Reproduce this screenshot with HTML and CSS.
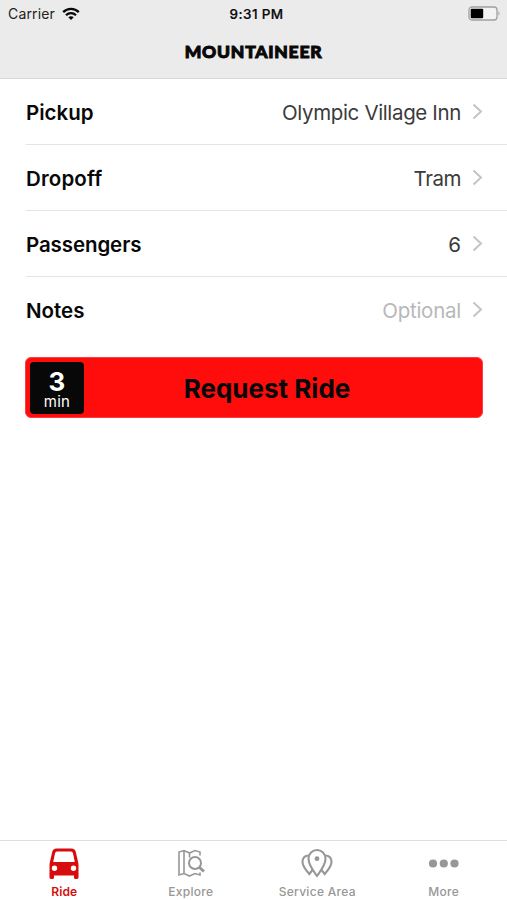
FILE: index.html
```html
<!DOCTYPE html>
<html lang="en">
<head>
<meta charset="utf-8">
<title>Mountaineer</title>
<link rel="stylesheet" href="styles.css">
</head>
<body>
<div class="app">
  <header class="header">
    <div class="status">
      <div class="carrier"><span>Carrier</span>
        <svg width="18" height="14" viewBox="0 0 18 14" fill="none" stroke="#080808" stroke-width="2.3"><path d="M1.2 5.1C5.5.8 12.5.8 16.800 5.1M4 8.200c2.800-2.800 7.200-2.800 10 0"/><path d="M6.300 10.300c1.500-1.500 3.900-1.500 5.400 0L9 13z" fill="#080808" stroke="none"/></svg>
      </div>
      <span class="time">9:31 PM</span>
      <svg class="battery" width="33" height="15" viewBox="0 0 33 15"><rect x="1" y="1" width="28" height="13" rx="3" fill="#f3f3f3" stroke="#a0a0a0" stroke-width="1.300"/><rect x="2.700" y="2.700" width="12.500" height="9.600" rx="1" fill="#000"/><path d="M30.500 5.300q2 2.200 0 4.400z" fill="#999"/></svg>
    </div>
    <h1 class="title">MOUNTAINEER</h1>
  </header>
  <main class="main">
    <div class="row"><span class="label">Pickup</span><span class="value village">Olympic Village Inn</span><svg class="chevron" viewBox="0 0 11 17"><path d="M1.500 1.500l7.500 7-7.500 7"/></svg></div>
    <div class="row"><span class="label dropoff">Dropoff</span><span class="value tram">Tram</span><svg class="chevron" viewBox="0 0 11 17"><path d="M1.500 1.500l7.500 7-7.500 7"/></svg></div>
    <div class="row"><span class="label passengers">Passengers</span><span class="value">6</span><svg class="chevron" viewBox="0 0 11 17"><path d="M1.500 1.500l7.500 7-7.500 7"/></svg></div>
    <div class="row"><span class="label">Notes</span><span class="value optional">Optional</span><svg class="chevron" viewBox="0 0 11 17"><path d="M1.500 1.500l7.500 7-7.500 7"/></svg></div>
    <button class="request">
      <span class="eta"><b>3</b><span>min</span></span>
      <span class="request-label">Request Ride</span>
    </button>
  </main>
  <nav class="tabs">
    <a class="tab active">
      <svg width="32" height="34" viewBox="0 0 32 34"><path fill="#d80c0c" fill-rule="evenodd" d="M8.500 1.500h15q3.500 0 4.300 3.500l2.200 9.500q.5 1.500.5 4v12q0 1.500-2 1.500h-1q-1.500 0-1.500-1.500V28.500H6v2Q6 32 4.500 32h-1q-2 0-2-1.500v-12q0-2.500.5-4L4.200 5q.8-3.500 4.300-3.500zM9 4.500Q7.500 4.500 7.100 6L5.200 15h21.600l-1.900-9Q24.500 4.500 23 4.500zM6.500 18.500a2.700 2.700 0 1 0 0 5.400 2.700 2.700 0 0 0 0-5.400zm19 0a2.700 2.700 0 1 0 0 5.400 2.700 2.700 0 0 0 0-5.400z"/></svg>
      <span>Ride</span>
    </a>
    <a class="tab">
      <svg width="32" height="34" viewBox="0 0 32 34" fill="none" stroke="#979797" stroke-width="1.600"><path d="M25 8.500V5l-5-1.500L14.500 6 9 3.500 4 5v23l5-1.500 5.500 2.500 5.500-2.500 5 1.500v-2.500M9 4v22.500M14.500 6v4.500"/><circle cx="20" cy="16" r="6" stroke-width="2"/><path stroke-width="3" d="M24.500 20.500l4.500 4"/></svg>
      <span>Explore</span>
    </a>
    <a class="tab">
      <svg width="32" height="34" viewBox="0 0 32 34" fill="none" stroke="#979797" stroke-width="2.100"><path d="M16 29C12 23.500 7.500 18 7.500 11.500a8.500 8.500 0 0 1 17 0c0 6.500-4.500 12-8.500 17.500z"/><circle cx="16" cy="11.700" r="2.400" fill="#979797" stroke="none"/><path d="M7 8.500C3.500 9 1.500 11.500 1.500 15c0 4.500 3.500 8 6.800 12l3.200-4M25 8.500c3.500.5 5.500 3 5.500 6.500 0 4.500-3.500 8-6.800 12l-3.200-4"/></svg>
      <span>Service Area</span>
    </a>
    <a class="tab">
      <svg width="32" height="34" viewBox="0 0 32 34" fill="#979797"><circle cx="5" cy="16.500" r="4.100"/><circle cx="15.800" cy="16.500" r="4.100"/><circle cx="26.500" cy="16.500" r="4.100"/></svg>
      <span>More</span>
    </a>
  </nav>
</div>
</body>
</html>
```
FILE: styles.css
```css
* { box-sizing: border-box; }
body { margin: 0; background: #fff; color: #080808; font-family: Inter, "Liberation Sans", sans-serif; }
.app { height: 900px; display: flex; flex-direction: column; }
.header { height: 79px; background: #ebebeb; border-bottom: 1px solid #d6d6d6; }
.status { height: 27px; padding: 0 6px 0 8px; display: grid; grid-template-columns: 1fr auto 1fr; align-items: center; font-size: 14px; }
.carrier { display: flex; align-items: center; gap: 7px; letter-spacing: .15px; color: #222; }
.time { padding-left: 4px; font-size: 13.500px; font-weight: 500; letter-spacing: .5px; word-spacing: -.5px; -webkit-text-stroke: .2px; }
.battery { justify-self: end; }
.title { margin: 13px 0 0; text-align: center; font-family: Lato, sans-serif; font-size: 17.500px; line-height: 23px; font-weight: 900; letter-spacing: .75px; -webkit-text-stroke: 1px #080808; }
.main { flex: 1; }
.row { height: 66px; margin-left: 26px; padding-right: 24px; display: flex; align-items: center; border-bottom: 1px solid #e4e4e4; font-size: 20.500px; }
.row:nth-child(4) { border-bottom-color: transparent; }
.label { padding-top: 2px; font-weight: 600; }
.dropoff { letter-spacing: .15px; }
.passengers { letter-spacing: -.1px; }
.value { margin-left: auto; padding-top: 2px; color: #3b3b3b; }
.village { letter-spacing: -.36px; }
.tram { letter-spacing: -.45px; }
.optional { color: #b8b8b8; letter-spacing: -.25px; }
.chevron { width: 11px; height: 17px; margin-left: 11px; fill: none; stroke: #c4c4c4; stroke-width: 2; }
.request { width: 458px; height: 61px; margin: 14.400px 0 0 25px; padding: 4px; display: flex; align-items: center; border: 1px solid #ff3c3c; border-radius: 6px; background: #ff0c0c; color: #080808; font-family: inherit; }
.eta { width: 54px; height: 52px; padding-top: 8px; display: flex; flex-direction: column; align-items: center; border-radius: 4px; background: #080808; color: #fff; font-size: 15px; }
.eta b { font-size: 26px; line-height: 24px; font-weight: 700; }
.eta span { line-height: 16px; letter-spacing: .3px; }
.request-label { flex: 1; padding: 1px 28px 0 0; text-align: center; font-size: 26px; font-weight: 700; }
.tabs { height: 60px; padding-left: 1px; display: grid; grid-template-columns: repeat(4, 126.500px); border-top: 1px solid #dedede; }
.tab { padding-top: 6px; display: flex; flex-direction: column; align-items: center; color: #979797; font-size: 12px; line-height: 16px; font-weight: 500; letter-spacing: .3px; }
.tab span { margin-top: 3px; }
.active { color: #d80c0c; font-weight: 600; letter-spacing: .1px; }
```
